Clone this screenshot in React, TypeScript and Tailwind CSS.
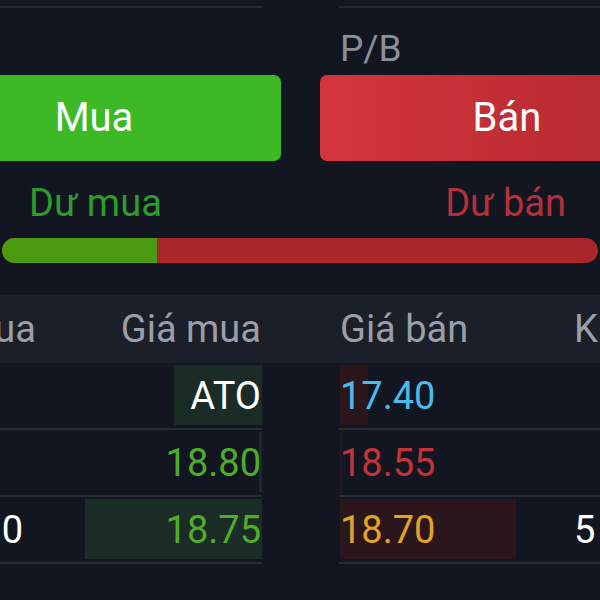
import React from 'react';

type Row = {
  buyVol: string;
  buyPrice: string;
  buyColor: string;
  buyBar: number;
  sellPrice: string;
  sellColor: string;
  sellBar: number;
  sellVol: string;
};

const rows: Row[] = [
  { buyVol: '', buyPrice: 'ATO', buyColor: 'text-white', buyBar: 88, sellPrice: '17.40', sellColor: 'text-[#4bb9ea]', sellBar: 28, sellVol: '' },
  { buyVol: '', buyPrice: '18.80', buyColor: 'text-[#4fac2b]', buyBar: 3, sellPrice: '18.55', sellColor: 'text-[#c4323b]', sellBar: 2, sellVol: '' },
  { buyVol: '0', buyPrice: '18.75', buyColor: 'text-[#4fac2b]', buyBar: 177, sellPrice: '18.70', sellColor: 'text-[#e1a328]', sellBar: 176, sellVol: '5' },
];

function BookRow({ r }: { r: Row }) {
  return (
    <div className="flex h-[67px]">
      <div className="relative w-[262px] shrink-0 border-b-2 border-[#272b36]">
        <div className="absolute right-0 top-[2px] bottom-[3px] bg-[#1b2b25]" style={{ width: r.buyBar }} />
        <div className="relative flex h-full items-center justify-between">
          <div className="flex w-[23px] justify-end whitespace-nowrap text-white">{r.buyVol}</div>
          <div className={`pr-[1px] ${r.buyColor}`}>{r.buyPrice}</div>
        </div>
      </div>
      <div className="relative ml-[77px] w-[261px] shrink-0 border-b-2 border-[#272b36]">
        <div className="absolute left-[1px] top-[2px] bottom-[3px] bg-[#2a161b]" style={{ width: r.sellBar }} />
        <div className="relative flex h-full items-center">
          <div className={`w-[235px] shrink-0 pl-[1px] ${r.sellColor}`}>{r.sellPrice}</div>
          <div className="text-white">{r.sellVol}</div>
        </div>
      </div>
    </div>
  );
}

export default function App() {
  return (
    <div
      className="h-[600px] w-[600px] overflow-hidden bg-[#121620] text-[38px] leading-none"
      style={{ fontFamily: 'Roboto, "Noto Sans", sans-serif' }}
    >
      {/* top dividers + P/B */}
      <div className="h-[75px] pt-[6px]">
        <div className="flex h-[2px]">
          <div className="w-[262px] bg-[#262a35]" />
          <div className="ml-[77px] flex-1 bg-[#262a35]" />
        </div>
        <div className="flex h-[67px] items-center pl-[340px] pt-[14px] text-[37px] text-[#8a8e98]">P/B</div>
      </div>

      {/* buy / sell buttons */}
      <div className="-ml-[93px] flex h-[86px] gap-[39px]">
        <div className="flex w-[374px] shrink-0 items-center justify-center rounded-[7px] bg-[#3db925] text-[40px] text-white">
          Mua
        </div>
        <div className="flex w-[374px] shrink-0 items-center justify-center rounded-[7px] bg-gradient-to-r from-[#d4353d] to-[#b0272d] text-[40px] text-white">
          Bán
        </div>
      </div>

      {/* surplus labels */}
      <div className="flex h-[77px] items-center justify-between pl-[29px] pr-[34px] pt-[6px]">
        <span className="text-[#2e9b2b]">Dư mua</span>
        <span className="text-[#b5303a]">Dư bán</span>
      </div>

      {/* ratio bar */}
      <div className="mx-[2px] flex h-[25px] overflow-hidden rounded-full bg-[#a9262b]">
        <div className="w-[155px] bg-[#4b9a0f]" />
      </div>

      {/* table header */}
      <div className="mt-[32px] flex h-[68px] items-center bg-[#1b1f29] text-[#9b9ea7]">
        <div className="flex w-[262px] shrink-0 items-center justify-between">
          <div className="flex w-[36px] justify-end whitespace-nowrap">KL mua</div>
          <div className="pr-[1px]">Giá mua</div>
        </div>
        <div className="ml-[77px] flex items-center">
          <div className="w-[235px] shrink-0 pl-[1px]">Giá bán</div>
          <div className="whitespace-nowrap">KL bán</div>
        </div>
      </div>

      {rows.map((r, i) => (
        <BookRow key={i} r={r} />
      ))}
    </div>
  );
}
